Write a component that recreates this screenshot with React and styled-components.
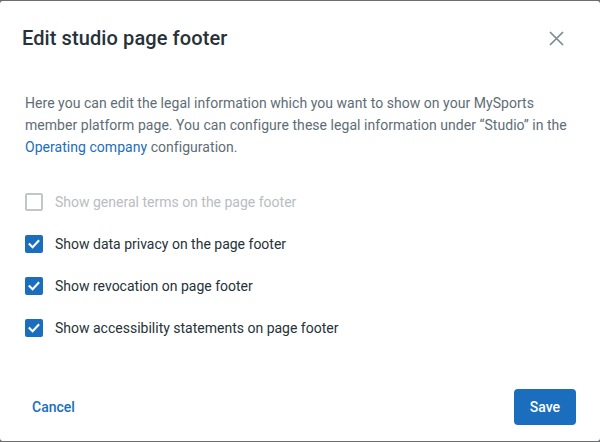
import React, { useState } from 'react'
import styled, { createGlobalStyle } from 'styled-components'

const GlobalStyle = createGlobalStyle`
    html, body {
        margin: 0;
        padding: 0;
        background: #6b6d6e;
        font-family: Roboto, "Liberation Sans", Arial, sans-serif;
    }
`

const options = [
    { id: 'terms', label: 'Show general terms on the page footer', checked: false, disabled: true },
    { id: 'privacy', label: 'Show data privacy on the page footer', checked: true },
    { id: 'revocation', label: 'Show revocation on page footer', checked: true },
    { id: 'accessibility', label: 'Show accessibility statements on page footer', checked: true },
]

function Checkbox({ checked, disabled, onToggle })
{
    return (
        <Box checked={checked} disabled={disabled} onClick={disabled ? undefined : onToggle}>
            {checked && (
                <svg width='14' height='14' viewBox='0 0 14 14'>
                    <path d='M2.6 7.3 L5.6 10.2 L11.4 4' fill='none' stroke='#fff' strokeWidth='2.1' strokeLinecap='square' />
                </svg>
            )}
        </Box>
    )
}

export default function App()
{
    const [values, setValues] = useState(options)

    const toggle = (id) =>
    {
        setValues(values.map(o => o.id === id ? { ...o, checked: !o.checked } : o))
    }

    return (
        <>
            <GlobalStyle />
            <Dialog>
                <Header>
                    <Title>Edit studio page footer</Title>
                    <CloseButton aria-label='Close'>
                        <svg width='15' height='15' viewBox='0 0 15 15'>
                            <path d='M1 1 L14 14 M14 1 L1 14' stroke='#7d8a91' strokeWidth='1.7' fill='none' />
                        </svg>
                    </CloseButton>
                </Header>

                <Description>
                    Here you can edit the legal information which you want to show on your MySports
                    member platform page. You can configure these legal information under “Studio” in the{' '}
                    <Link>Operating company</Link> configuration.
                </Description>

                <OptionList>
                    {values.map(o => (
                        <Option key={o.id}>
                            <Checkbox checked={o.checked} disabled={o.disabled} onToggle={() => toggle(o.id)} />
                            <Label disabled={o.disabled}>{o.label}</Label>
                        </Option>
                    ))}
                </OptionList>

                <Footer>
                    <TextButton>Cancel</TextButton>
                    <PrimaryButton>Save</PrimaryButton>
                </Footer>
            </Dialog>
        </>
    )
}

const Dialog = styled.div`
    margin-top: 1px;
    height: 440px;
    width: 600px;
    background: #fff;
    border-radius: 3px;
    display: flex;
    flex-direction: column;
    box-sizing: border-box;
`

const Header = styled.div`
    display: flex;
    align-items: center;
    justify-content: space-between;
    padding: 25px 36px 0 22px;
    height: 24px;
`

const Title = styled.h2`
    margin: 0;
    font-size: 20px;
    line-height: 24px;
    font-weight: 500;
    color: #263238;
    letter-spacing: 0.1px;
`

const CloseButton = styled.button`
    border: none;
    background: none;
    padding: 0;
    width: 15px;
    height: 15px;
    display: grid;
    place-items: center;
    cursor: pointer;
`

const Description = styled.p`
    margin: 42px 20px 0 25px;
    font-size: 14px;
    line-height: 22px;
    letter-spacing: 0.04px;
    color: #5e6d75;
`

const Link = styled.a`
    color: #1a6ebd;
    cursor: pointer;
`

const OptionList = styled.div`
    display: flex;
    flex-direction: column;
    margin-top: 23px;
    padding-left: 25px;
`

const Option = styled.div`
    display: flex;
    align-items: center;
    height: 42px;
    gap: 12px;
`

const Box = styled.div`
    width: 18px;
    height: 18px;
    box-sizing: border-box;
    border-radius: 2px;
    display: grid;
    place-items: center;
    background: ${p => p.checked ? '#1a6ebd' : '#fff'};
    border: ${p => p.checked ? 'none' : '2px solid #c2c6c8'};
    cursor: ${p => p.disabled ? 'default' : 'pointer'};
`

const Label = styled.span`
    font-size: 14px;
    color: ${p => p.disabled ? '#b8bdc0' : '#263238'};
`

const Footer = styled.div`
    margin-top: auto;
    display: flex;
    align-items: center;
    justify-content: space-between;
    padding: 0 24px 16px 24px;
`

const TextButton = styled.button`
    border: none;
    background: none;
    padding: 0 8px;
    height: 36px;
    font-family: inherit;
    font-size: 14px;
    font-weight: 500;
    color: #1a6ebd;
    cursor: pointer;
`

const PrimaryButton = styled.button`
    border: none;
    background: #1a6ebd;
    color: #fff;
    border-radius: 4px;
    height: 36px;
    padding: 0 16px;
    font-family: inherit;
    font-size: 14px;
    font-weight: 500;
    cursor: pointer;
`
